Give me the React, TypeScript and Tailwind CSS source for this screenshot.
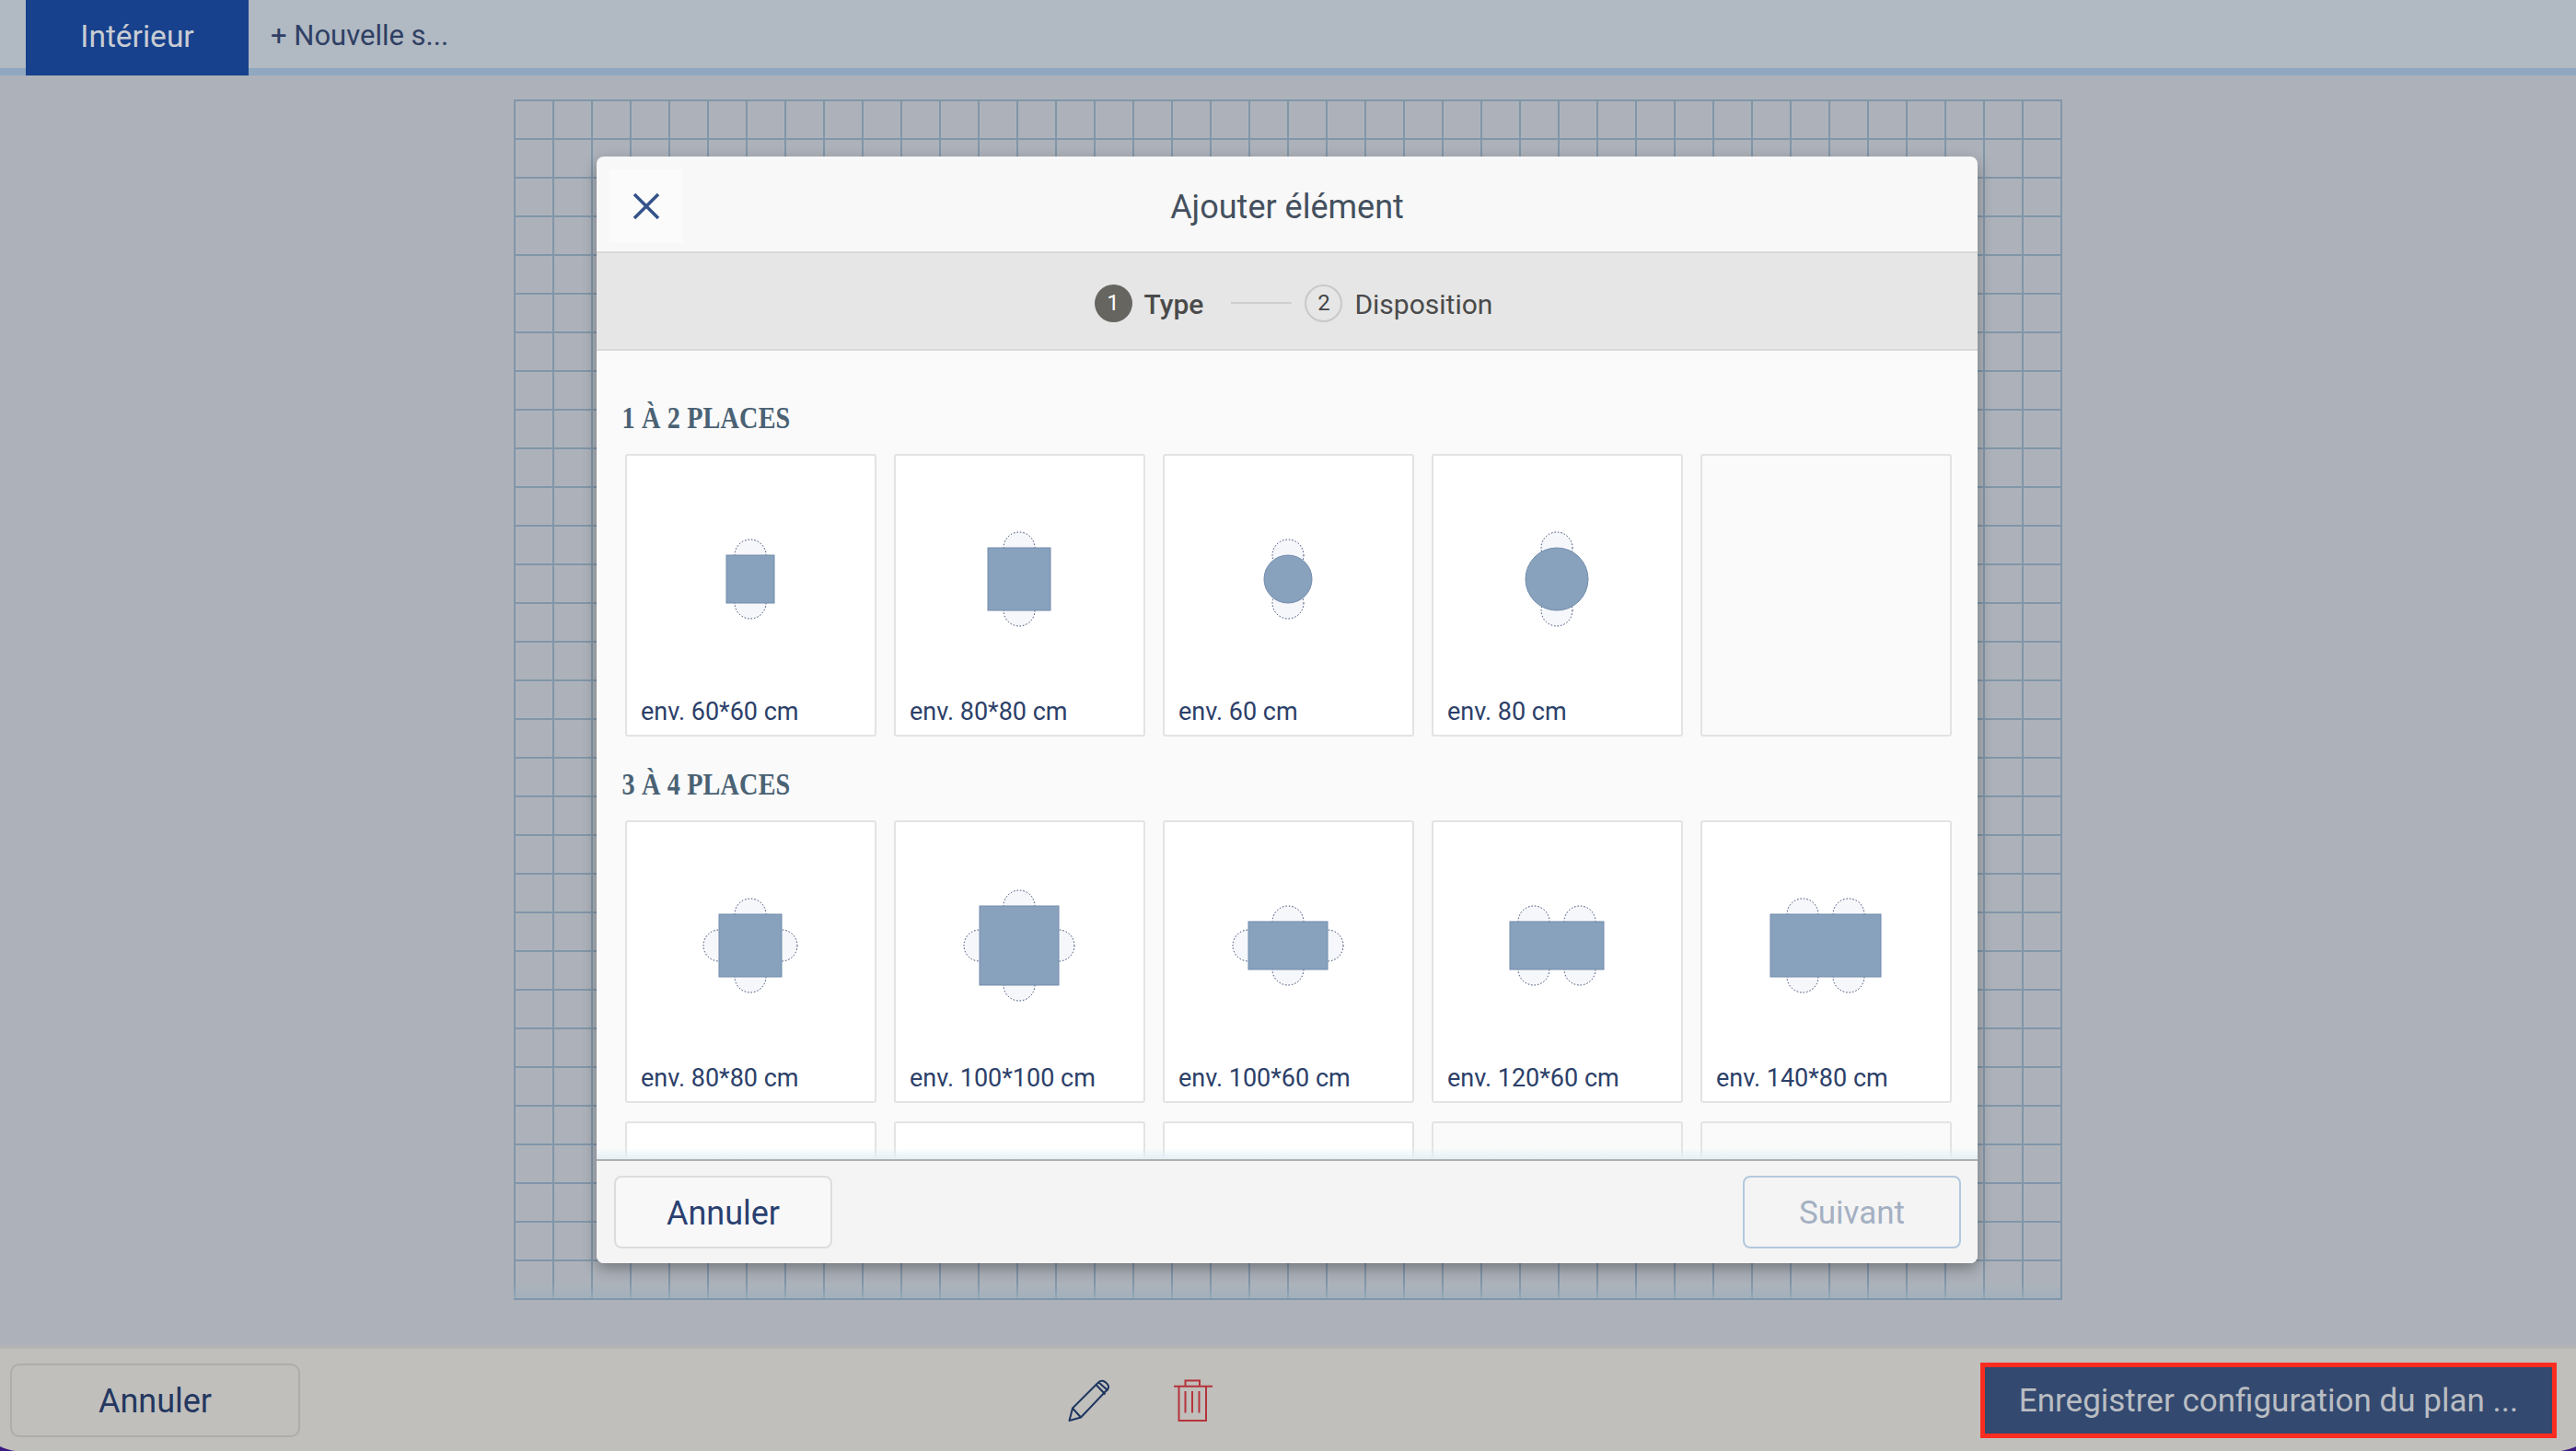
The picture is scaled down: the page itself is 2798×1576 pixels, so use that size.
type Plan = {
  label: string
  w: number
  h: number
  round?: boolean
  side?: boolean
  pair?: boolean
}

const smallTables: Plan[] = [
  { label: 'env. 60*60 cm', w: 52, h: 52 },
  { label: 'env. 80*80 cm', w: 68, h: 68 },
  { label: 'env. 60 cm', w: 52, h: 52, round: true },
  { label: 'env. 80 cm', w: 68, h: 68, round: true }
]

const mediumTables: Plan[] = [
  { label: 'env. 80*80 cm', w: 68, h: 68, side: true },
  { label: 'env. 100*100 cm', w: 86, h: 86, side: true },
  { label: 'env. 100*60 cm', w: 86, h: 52, side: true },
  { label: 'env. 120*60 cm', w: 102, h: 52, pair: true },
  { label: 'env. 140*80 cm', w: 120, h: 68, pair: true }
]

function Chair({ x, y }: { x: number; y: number }) {
  return (
    <circle
      cx={x}
      cy={y}
      r={17}
      fill="#f6f7fb"
      stroke="#2c3d66"
      strokeWidth={1}
      strokeDasharray="1.5 2"
    />
  )
}

function TablePlan({ plan }: { plan: Plan }) {
  const { w, h, round, side, pair } = plan
  const xs = pair ? [-25, 25] : [0]
  return (
    <svg width={180} height={140} viewBox="-89 -71 180 140">
      {xs.map(x => (
        <g key={x}>
          <Chair x={x} y={-h / 2} />
          <Chair x={x} y={h / 2} />
        </g>
      ))}
      {side && (
        <>
          <Chair x={-w / 2} y={0} />
          <Chair x={w / 2} y={0} />
        </>
      )}
      {round ? (
        <circle r={w / 2} fill="#88a1bd" stroke="#728cab" strokeWidth={1} />
      ) : (
        <rect
          x={-w / 2}
          y={-h / 2}
          width={w}
          height={h}
          fill="#88a1bd"
          stroke="#728cab"
          strokeWidth={1}
        />
      )}
    </svg>
  )
}

function Card({ plan, muted }: { plan?: Plan; muted?: boolean }) {
  return (
    <div
      className={`h-[307px] rounded-[3px] border-2 border-[#e3e3e3] ${
        muted ? 'bg-[#fafafa]' : 'bg-white'
      }`}
    >
      {plan && (
        <>
          <div className="flex h-[266px] items-center justify-center">
            <TablePlan plan={plan} />
          </div>
          <div className="h-[24px] pl-[15px] text-[27px] leading-[24px] text-[#2c4069]">
            {plan.label}
          </div>
        </>
      )}
    </div>
  )
}

function SectionTitle({ children }: { children: React.ReactNode }) {
  return (
    <h2 className="flex h-[48px] origin-left scale-x-[0.83] items-center pl-[33px] [font-family:'Liberation_Serif',serif] text-[34px] font-bold tracking-[0.2px] text-[#4a6274]">
      {children}
    </h2>
  )
}

function Step({
  n,
  label,
  active
}: {
  n: number
  label: string
  active?: boolean
}) {
  return (
    <div className="flex items-center gap-[13px]">
      <span
        className={`flex size-[41px] items-center justify-center rounded-full text-[24px] ${
          active
            ? 'bg-[#666560] text-white'
            : 'border-2 border-[#c8c8c8] text-[#444]'
        }`}
      >
        {n}
      </span>
      <span
        className={`pt-[2px] text-[30px] text-[#4a4a4a] ${
          active ? 'font-medium' : ''
        }`}
      >
        {label}
      </span>
    </div>
  )
}

function Dialog() {
  return (
    <div className="absolute top-[62px] left-[90px] flex h-[1202px] w-[1500px] flex-col overflow-hidden rounded-[8px] bg-[#f8f8f8] shadow-[0_6px_16px_rgba(0,0,0,0.32)]">
      <div className="relative flex h-[103px] shrink-0 items-center justify-center">
        <button
          type="button"
          className="absolute top-[14px] left-[14px] flex size-[80px] items-center justify-center bg-[#fbfbfb]"
        >
          <svg width={30} height={30} viewBox="0 0 30 30">
            <path
              d="M2 2 28 28M28 2 2 28"
              stroke="#33528a"
              strokeWidth={3.5}
              fill="none"
            />
          </svg>
        </button>
        <span className="pt-[7px] text-[36px] text-[#44505e]">
          Ajouter élément
        </span>
      </div>

      <div className="flex h-[108px] shrink-0 items-center justify-center border-y-2 border-y-[#d9d9d9] bg-[#e6e6e6] pt-[4px] pl-[14px]">
        <Step n={1} label="Type" active />
        <div className="mr-[14px] ml-[30px] h-[2px] w-[66px] bg-[#cfcfcf]" />
        <Step n={2} label="Disposition" />
      </div>

      <div className="relative min-h-0 flex-1 overflow-hidden bg-[#fafafa] pt-[48px]">
        <SectionTitle>1 À 2 PLACES</SectionTitle>
        <div className="mt-[16px] mb-[27px] grid w-[1472px] grid-cols-5 gap-x-[19px] pl-[31px]">
          {smallTables.map(plan => (
            <Card key={plan.label} plan={plan} />
          ))}
          <Card muted />
        </div>
        <SectionTitle>3 À 4 PLACES</SectionTitle>
        <div className="mt-[16px] grid w-[1472px] grid-cols-5 gap-x-[19px] gap-y-[20px] pl-[31px]">
          {mediumTables.map(plan => (
            <Card key={plan.label} plan={plan} />
          ))}
          <Card />
          <Card />
          <Card />
          <Card muted />
          <Card muted />
        </div>
        <div className="absolute inset-x-0 bottom-0 h-[12px] bg-gradient-to-b from-transparent to-[#e4f0f6]" />
      </div>

      <div className="flex h-[113px] shrink-0 items-center justify-between border-t-2 border-t-[#aeb1b2] bg-[#f4f4f4] pr-[18px] pl-[19px]">
        <button
          type="button"
          className="h-[79px] w-[237px] rounded-[8px] border-2 border-[#dcdcdc] bg-[#f8f8f8] pt-[3px] text-[36px] text-[#2a4070]"
        >
          Annuler
        </button>
        <button
          type="button"
          className="h-[79px] w-[237px] rounded-[8px] border-2 border-[#b3c8dd] pt-[4px] text-[35px] text-[#a4b0c2]"
        >
          Suivant
        </button>
      </div>
    </div>
  )
}

function PencilIcon() {
  return (
    <svg width={52} height={54} viewBox="15 12 52 54" fill="none">
      <path
        d="M20.5 61 24 47.5 51 20.5Q54 17 57.5 18 60 19 62 21.5 64 24.5 62 27L33 57.5ZM24 47.5 33 57.5M49.5 22 59.5 32.5M52.5 19.5 62.5 28.5"
        stroke="#1f3560"
        strokeWidth={2}
        strokeLinejoin="round"
      />
    </svg>
  )
}

function TrashIcon() {
  return (
    <svg width={44} height={48} viewBox="134 15 44 48" fill="none">
      <path
        d="M135 23.7H177M147.5 23.7V17.5H163V23.7M140.5 23.7V61H170V23.7M147.5 29V52.5M155 29V52.5M162.5 29V52.5"
        stroke="#b5333a"
        strokeWidth={2}
      />
    </svg>
  )
}

export default function App() {
  return (
    <div className="relative flex h-[1576px] w-[2798px] flex-col overflow-hidden bg-[#adb2ba] [font-family:'Roboto',sans-serif]">
      <div className="flex h-[82px] shrink-0 items-start border-b-8 border-b-[#8fa8c0] bg-[#b1b9c3] pl-[28px]">
        <div className="flex h-[82px] w-[242px] items-center justify-center bg-[#17418c] pb-[2px] text-[33.5px] text-[#c9ccd3]">
          Intérieur
        </div>
        <div className="flex h-[74px] items-center pt-[4px] pl-[24px] text-[31px] text-[#2f3f63]">
          + Nouvelle s...
        </div>
      </div>

      <div className="flex min-h-0 flex-1 justify-center">
        <div className="relative mt-[26px] h-[1304px] w-[1682px] border-r-2 border-b-2 border-[#8196a9] bg-[linear-gradient(to_right,#8196a9_2px,transparent_2px),linear-gradient(to_bottom,#8196a9_2px,transparent_2px)] bg-[size:42px_42px]">
          <div className="absolute inset-x-0 bottom-0 h-[16px] bg-gradient-to-b from-transparent to-[#9db0be]/70" />
          <Dialog />
        </div>
      </div>

      <div className="flex h-[114px] shrink-0 items-center justify-between border-t-[3px] border-t-[#b5b5b2] bg-[#c0bfbc] pr-[21px] pl-[11px]">
        <button
          type="button"
          className="h-[80px] w-[315px] rounded-[10px] border-2 border-[#adadaa] pt-[2px] text-[36px] text-[#24375f]"
        >
          Annuler
        </button>
        <div className="mr-[4px] flex items-center gap-[66px]">
          <PencilIcon />
          <TrashIcon />
        </div>
        <button
          type="button"
          className="h-[82px] w-[626px] border-[5px] border-[#fb2c20] bg-[#34496f] pt-[4px] text-[35px] text-[#b9bdc3]"
        >
          Enregistrer configuration du plan ...
        </button>
      </div>

      <svg
        className="absolute bottom-0 left-0"
        width={16}
        height={5}
        viewBox="0 0 16 5"
      >
        <path d="M0 0Q6 3 16 5H0Z" fill="#3a1a80" />
      </svg>
      <svg
        className="absolute right-0 bottom-0"
        width={16}
        height={5}
        viewBox="0 0 16 5"
      >
        <path d="M16 0Q10 3 0 5H16Z" fill="#3a1a80" />
      </svg>
    </div>
  )
}
